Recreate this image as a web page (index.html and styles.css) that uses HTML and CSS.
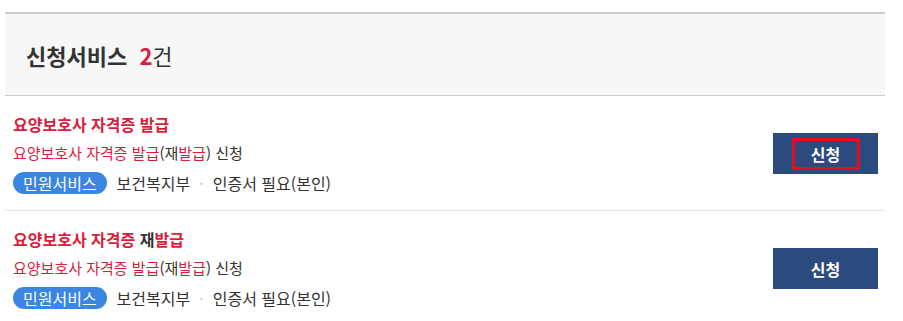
FILE: index.html
```html
<!DOCTYPE html>
<html lang="ko">
<head>
<meta charset="utf-8">
<title>신청서비스</title>
<link rel="stylesheet" href="styles.css">
</head>
<body>
<div class="wrap">
  <div class="head">
    <h2 class="head-title">신청서비스 <span class="count">2</span><span class="unit">건</span></h2>
  </div>
  <ul class="list">
    <li class="item">
      <div class="info">
        <div class="title"><em>요양보호사</em> <em>자격증</em> <em>발급</em></div>
        <div class="desc"><em>요양보호사</em> <em>자격증</em> <em>발급</em>(재<em>발급</em>) 신청</div>
        <div class="meta">
          <span class="badge">민원서비스</span>
          <span class="org">보건복지부</span>
          <span class="dot">·</span>
          <span class="cert">인증서 필요(본인)</span>
        </div>
      </div>
      <button class="btn" type="button"><span class="btn-label focus">신청</span></button>
    </li>
    <li class="item">
      <div class="info">
        <div class="title"><em>요양보호사</em> <em>자격증</em> 재<em>발급</em></div>
        <div class="desc"><em>요양보호사</em> <em>자격증</em> <em>발급</em>(재<em>발급</em>) 신청</div>
        <div class="meta">
          <span class="badge">민원서비스</span>
          <span class="org">보건복지부</span>
          <span class="dot">·</span>
          <span class="cert">인증서 필요(본인)</span>
        </div>
      </div>
      <button class="btn" type="button"><span class="btn-label">신청</span></button>
    </li>
  </ul>
</div>
</body>
</html>
```

FILE: styles.css
```css
* { box-sizing: border-box; }
html, body { margin: 0; padding: 0; background: #fff; }
body {
  font-family: "Noto Sans CJK KR", "Noto Sans", sans-serif;
  color: #333;
}
.wrap {
  width: 880px;
  margin: 12px 0 0 5px;
}
.head {
  border-top: 2px solid #cccccc;
  border-bottom: 1px solid #cccccc;
  background: #f7f7f7;
  height: 84px;
  display: flex;
  align-items: center;
  padding-left: 21px;
}
.head-title {
  margin: 0;
  font-size: 22px;
  font-weight: 700;
  color: #333;
  line-height: 28px;
}
.count { color: #d81e3c; font-weight: 700; margin-left: 6px; }
.unit { font-weight: 400; }
.list { list-style: none; margin: 0; padding: 0; }
.item {
  display: flex;
  align-items: center;
  justify-content: space-between;
  padding: 16px 7px 16px 8px;
  border-bottom: 1px solid #e5e5e5;
}
.info { display: flex; flex-direction: column; }
.title {
  font-size: 16px;
  font-weight: 700;
  line-height: 24px;
  color: #333;
}
.title em, .desc em { font-style: normal; color: #d81e3c; }
.desc {
  margin-top: 6px;
  font-size: 15px;
  line-height: 22px;
  color: #333;
}
.meta {
  margin-top: 8px;
  display: flex;
  align-items: center;
  font-size: 16px;
  line-height: 22px;
  color: #333;
}
.badge {
  background: #3b86e2;
  color: #fff;
  border-radius: 11px;
  height: 22px;
  padding: 0 10px;
  display: inline-flex;
  align-items: center;
}
.org { margin-left: 10px; }
.dot { margin: 0 9px; color: #ccc; }
.btn {
  width: 105px;
  height: 41px;
  background: #2b4a7d;
  border: 0;
  padding: 0;
  display: flex;
  align-items: center;
  justify-content: center;
  font-family: inherit;
  cursor: pointer;
}
.btn-label {
  color: #fff;
  font-size: 16px;
  font-weight: 700;
  width: 68px;
  height: 32px;
  display: flex;
  align-items: center;
  justify-content: center;
  border: 3px solid transparent;
  margin-top: 1px;
}
.btn-label.focus { border-color: #e0101c; }
```
